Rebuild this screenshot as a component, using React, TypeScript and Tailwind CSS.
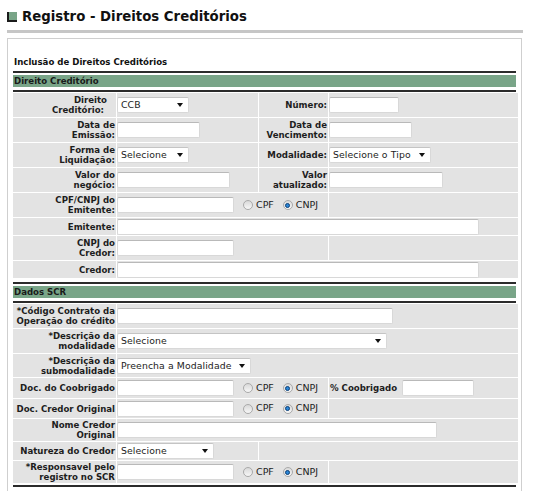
import type { ReactNode } from "react";

const font = "font-['DejaVu_Sans',Verdana,sans-serif]";

function Label({ children, h = "h-[24px]", className = "" }: { children: ReactNode; h?: string; className?: string }) {
  return (
    <div
      className={`${h} flex flex-col items-end justify-center bg-[#e3e3e3] pr-[1px] text-right text-[8.6px] font-bold leading-[10px] text-[#1d1d1d] ${className}`}
    >
      {children}
    </div>
  );
}

function Cell({ children, className = "" }: { children?: ReactNode; className?: string }) {
  return <div className={`flex items-center bg-[#e3e3e3] ${className}`}>{children}</div>;
}

function Input({ w }: { w: string }) {
  return <div className={`${w} h-[16px] rounded-[2px] border border-[#d8d8d8] border-t-[#b9b9b9] bg-white`} />;
}

function Select({ w, text }: { w: string; text: string }) {
  return (
    <div
      className={`${w} flex h-[16px] items-center justify-between rounded-[2px] border border-[#d8d8d8] border-t-[#c4c4c4] bg-white pl-[3px] pr-[5px] text-[9.3px] tracking-[0.1px] text-[#222]`}
    >
      <span>{text}</span>
      <span className="h-0 w-0 border-x-[3px] border-t-[4px] border-x-transparent border-t-[#111]" />
    </div>
  );
}

function Radio({ checked }: { checked?: boolean }) {
  return (
    <span className="flex h-[10px] w-[10px] items-center justify-center rounded-full border border-[#a9a9a9] bg-gradient-to-b from-[#d9d9d9] to-[#f7f7f7]">
      {checked && <span className="h-[5px] w-[5px] rounded-full border border-[#0b3f78] bg-[#2a86d6]" />}
    </span>
  );
}

function DocField() {
  return (
    <div className="flex items-center text-[9.5px] text-[#222]">
      <Input w="w-[117px]" />
      <span className="ml-[9px]">
        <Radio />
      </span>
      <span className="ml-[3px]">CPF</span>
      <span className="ml-[9px]">
        <Radio checked />
      </span>
      <span className="ml-[3px]">CNPJ</span>
    </div>
  );
}

function SectionBar({ title }: { title: string }) {
  return (
    <div>
      <div className="h-[2px] bg-[#2b2b2b]" />
      <div className="mt-[2px] flex h-[12px] items-center bg-[#79a588] pl-[1px] text-[8.6px] font-bold text-[#1a1a1a]">
        {title}
      </div>
      <div className="mt-[3px] h-[2px] bg-[#2b2b2b]" />
    </div>
  );
}

const grid = "mt-px grid grid-cols-[103px_141px_69px_189px] gap-px";

export default function App() {
  return (
    <div className={`${font} min-h-[491px] w-[535px] bg-white`}>
      <div className="flex items-center pl-[7px] pt-[9px]">
        <span className="h-[10px] w-[10px] border-b-2 border-l-2 border-[#1b1b1b] bg-[#79a588]" />
        <h1 className="ml-[5px] text-[13.3px] font-bold leading-[16px] text-[#111]">Registro - Direitos Creditórios</h1>
      </div>
      <div className="ml-[7px] mt-[5px] h-[3px] w-[516px] bg-[#c6c6c6]" />
      <div className="ml-[7px] mt-[5px] w-[515px] border border-[#cfcfcf] px-[5px] pb-[20px] pt-[17px]">
        <div className="pl-[1px] text-[8.6px] font-bold leading-[12px] text-[#111]">Inclusão de Direitos Creditórios</div>
        <div className="mt-[3px]">
          <SectionBar title="Direito Creditório" />
          <div className={grid}>
            <Label>
              <span className="pr-[8px]">Direito</span>
              <span className="pr-[11px]">Creditório:</span>
            </Label>
            <Cell>
              <Select w="w-[72px]" text="CCB" />
            </Cell>
            <Label>Número:</Label>
            <Cell>
              <Input w="w-[70px]" />
            </Cell>

            <Label>
              Data de
              <br />
              Emissão:
            </Label>
            <Cell>
              <Input w="w-[83px]" />
            </Cell>
            <Label>
              Data de
              <br />
              Vencimento:
            </Label>
            <Cell>
              <Input w="w-[83px]" />
            </Cell>

            <Label>
              Forma de
              <br />
              Liquidação:
            </Label>
            <Cell>
              <Select w="w-[72px]" text="Selecione" />
            </Cell>
            <Label>Modalidade:</Label>
            <Cell>
              <Select w="w-[102px]" text="Selecione o Tipo" />
            </Cell>

            <Label>
              Valor do
              <br />
              negócio:
            </Label>
            <Cell>
              <Input w="w-[113px]" />
            </Cell>
            <Label>
              Valor
              <br />
              atualizado:
            </Label>
            <Cell>
              <Input w="w-[114px]" />
            </Cell>

            <Label>
              CPF/CNPJ do
              <br />
              Emitente:
            </Label>
            <Cell className="col-span-2">
              <DocField />
            </Cell>
            <Cell />

            <Label h="h-[17px]">Emitente:</Label>
            <Cell className="col-span-3">
              <Input w="w-[362px]" />
            </Cell>

            <Label>
              CNPJ do
              <br />
              Credor:
            </Label>
            <Cell className="col-span-2">
              <Input w="w-[117px]" />
            </Cell>
            <Cell />

            <Label h="h-[17px]">Credor:</Label>
            <Cell className="col-span-3">
              <Input w="w-[362px]" />
            </Cell>
          </div>
        </div>

        <div className="mt-[4px]">
          <SectionBar title="Dados SCR" />
          <div className={grid}>
            <Label>
              *Código Contrato da
              <br />
              Operação do crédito
            </Label>
            <Cell className="col-span-3">
              <Input w="w-[276px]" />
            </Cell>

            <Label>
              *Descrição da
              <br />
              modalidade
            </Label>
            <Cell className="col-span-3">
              <Select w="w-[270px]" text="Selecione" />
            </Cell>

            <Label h="h-[23px]">
              *Descrição da
              <br />
              submodalidade
            </Label>
            <Cell className="col-span-3">
              <Select w="w-[134px]" text="Preencha a Modalidade" />
            </Cell>

            <Label h="h-[20px]">Doc. do Coobrigado</Label>
            <Cell className="col-span-2">
              <DocField />
            </Cell>
            <Cell className="pl-[1px]">
              <span className="text-[8.6px] font-bold text-[#1d1d1d]">% Coobrigado</span>
              <span className="ml-[5px]">
                <Input w="w-[72px]" />
              </span>
            </Cell>

            <Label h="h-[19px]">Doc. Credor Original</Label>
            <Cell className="col-span-2">
              <DocField />
            </Cell>
            <Cell />

            <Label h="h-[22px]">
              Nome Credor
              <br />
              Original
            </Label>
            <Cell className="col-span-3">
              <Input w="w-[320px]" />
            </Cell>

            <Label h="h-[18px]">Natureza do Credor</Label>
            <Cell>
              <Select w="w-[97px]" text="Selecione" />
            </Cell>
            <Cell className="col-span-2" />

            <Label h="h-[22px]">
              *Responsavel pelo
              <br />
              registro no SCR
            </Label>
            <Cell className="col-span-2">
              <DocField />
            </Cell>
            <Cell />
          </div>
          <div className="mt-[2px] h-[2px] bg-[#2b2b2b]" />
        </div>
      </div>
    </div>
  );
}
